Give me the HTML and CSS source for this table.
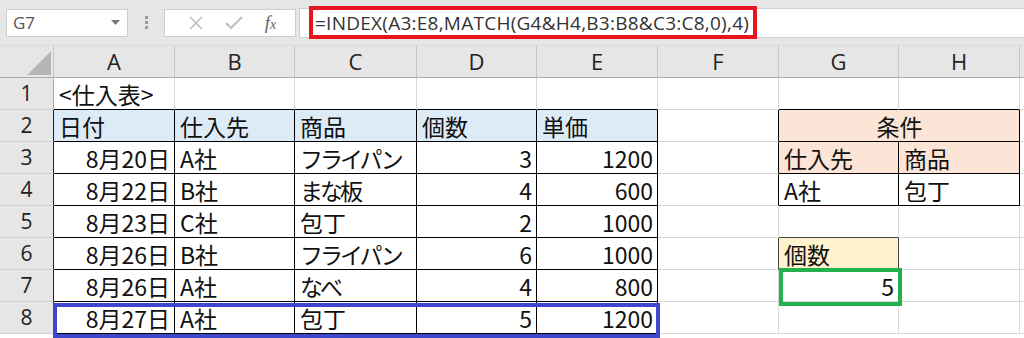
FILE: index.html
```html
<!DOCTYPE html>
<html lang="ja">
<head>
    <meta charset="UTF-8">
    <title>仕入表</title>
    <link rel="stylesheet" href="styles.css">
</head>
<body>
    <div class="toolbar">
        <div class="name-box">
            <span>G7</span>
            <svg class="caret" width="9" height="5" viewBox="0 0 9 5"><path d="M0 0h9L4.5 5z" fill="#777"/></svg>
        </div>
        <div class="grip"><i></i><i></i><i></i></div>
        <div class="fx-box">
            <svg width="16" height="16" viewBox="0 0 16 16"><path d="M2 2l12 12M14 2L2 14" stroke="#bdbdbd" stroke-width="1.6" fill="none"/></svg>
            <svg width="18" height="16" viewBox="0 0 18 16"><path d="M1 8l5 5L17 2" stroke="#bdbdbd" stroke-width="2" fill="none"/></svg>
            <span class="fx">f<small>x</small></span>
        </div>
        <div class="formula">
            <span class="hl">=INDEX(A3:E8,MATCH(G4&amp;H4,B3:B8&amp;C3:C8,0),4)</span>
        </div>
    </div>

    <div class="sheet">
        <!-- column headers -->
        <div class="corner"><div class="tri"></div></div>
        <div class="ch">A</div><div class="ch">B</div><div class="ch">C</div><div class="ch">D</div>
        <div class="ch">E</div><div class="ch">F</div><div class="ch">G</div><div class="ch">H</div><div class="ch"></div>

        <!-- row 1 -->
        <div class="rh">1</div>
        <div class="c top">&lt;仕入表&gt;</div><div class="c top"></div><div class="c top"></div><div class="c top"></div><div class="c top"></div>
        <div class="c"></div><div class="c top"></div><div class="c top"></div><div class="c"></div>

        <!-- row 2 -->
        <div class="rh k">2</div>
        <div class="c t blue">日付</div><div class="c t blue">仕入先</div><div class="c t blue">商品</div><div class="c t blue">個数</div><div class="c t blue">単価</div>
        <div class="c rb"></div><div class="c t peach span2 mid">条件</div><div class="c"></div>

        <!-- row 3 -->
        <div class="rh k">3</div>
        <div class="c t r">8月20日</div><div class="c t">A社</div><div class="c t p">フライパン</div><div class="c t r">3</div><div class="c t r">1200</div>
        <div class="c rb"></div><div class="c t peach">仕入先</div><div class="c t peach">商品</div><div class="c"></div>

        <!-- row 4 -->
        <div class="rh k">4</div>
        <div class="c t r">8月22日</div><div class="c t">B社</div><div class="c t p">まな板</div><div class="c t r">4</div><div class="c t r">600</div>
        <div class="c rb"></div><div class="c t">A社</div><div class="c t">包丁</div><div class="c"></div>

        <!-- row 5 -->
        <div class="rh k">5</div>
        <div class="c t r">8月23日</div><div class="c t">C社</div><div class="c t">包丁</div><div class="c t r">2</div><div class="c t r">1000</div>
        <div class="c"></div><div class="c gb"></div><div class="c"></div><div class="c"></div>

        <!-- row 6 -->
        <div class="rh k">6</div>
        <div class="c t r">8月26日</div><div class="c t">B社</div><div class="c t p">フライパン</div><div class="c t r">6</div><div class="c t r">1000</div>
        <div class="c grb"></div><div class="c yellow">個数</div><div class="c"></div><div class="c"></div>

        <!-- row 7 -->
        <div class="rh k">7</div>
        <div class="c t r">8月26日</div><div class="c t">A社</div><div class="c t p">なべ</div><div class="c t r">4</div><div class="c t r">800</div>
        <div class="c"></div><div class="c r result">5</div><div class="c"></div><div class="c"></div>

        <!-- row 8 -->
        <div class="rh k">8</div>
        <div class="c t r">8月27日</div><div class="c t">A社</div><div class="c t">包丁</div><div class="c t r">5</div><div class="c t r">1200</div>
        <div class="c"></div><div class="c"></div><div class="c"></div><div class="c"></div>

        <div class="row-mark"></div>
    </div>
</body>
</html>
```

FILE: styles.css
```css
body {
    margin: 0;
    width: 1024px;
    height: 338px;
    overflow: hidden;
    background: #fff;
    font-family: "Noto Sans CJK JP", "Noto Sans", sans-serif;
    color: #111;
}

/* formula bar */
.toolbar {
    height: 46px;
    background: #e6e6e6;
    display: flex;
    align-items: center;
    padding-left: 6px;
    box-sizing: border-box;
    border-bottom: 1px solid #dcdcdc;
}
.name-box {
    width: 122px;
    height: 28px;
    box-sizing: border-box;
    background: #fff;
    border: 1px solid #cfcfcf;
    display: flex;
    align-items: center;
    justify-content: space-between;
    padding: 0 7px 0 6px;
    font: 17px "Open Sans", sans-serif;
    color: #555;
}
.grip {
    width: 36px;
    display: flex;
    flex-direction: column;
    align-items: center;
    gap: 2px;
}
.grip i {
    width: 3px;
    height: 3px;
    background: #9a9a9a;
}
.fx-box {
    width: 132px;
    height: 28px;
    box-sizing: border-box;
    background: #fff;
    border: 1px solid #cfcfcf;
    display: flex;
    align-items: center;
    justify-content: space-around;
    padding: 0 8px 0 12px;
}
.fx {
    font: italic 19px "Liberation Serif", serif;
    color: #666;
}
.fx small {
    font-size: 14px;
}
.formula {
    flex: 1;
    height: 28px;
    margin-left: 3px;
    background: #fff;
    border: 1px solid #cfcfcf;
    border-right: none;
    display: flex;
    align-items: center;
    padding-left: 9px;
}
.hl {
    border: 4px solid #e8141e;
    height: 25px;
    line-height: 25px;
    padding: 0 4px 0 2px;
    font: 19px "Open Sans", sans-serif;
    letter-spacing: 0.25px;
    color: #333;
    white-space: nowrap;
}

/* grid */
.sheet {
    position: relative;
    display: grid;
    grid-template-columns: 54px 121px 120px 122px 120px 121px 121px 120px 121px 1fr;
    grid-template-rows: 32px repeat(8, 32px);
}
.corner, .ch, .rh {
    background: #e6e6e6;
    box-sizing: border-box;
    font: 21px/31px "Open Sans", sans-serif;
    color: #222;
    text-align: center;
}
.ch {
    font-size: 22px;
}
.corner {
    border-right: 1px solid #c4c4c4;
    border-bottom: 1px solid #ababab;
    position: relative;
}
.tri {
    position: absolute;
    right: 2px;
    bottom: 2px;
    width: 24px;
    height: 24px;
    background: #b5b5b5;
    clip-path: polygon(100% 0, 100% 100%, 0 100%);
}
.ch {
    border-right: 1px solid #c6c6c6;
    border-bottom: 1px solid #ababab;
}
.rh {
    border-right: 1px solid #ababab;
    border-bottom: 1px solid #d0d0d0;
}
.rh.k {
    border-right-color: #222;
}
.c {
    box-sizing: border-box;
    border-right: 1px solid #d9d9d9;
    border-bottom: 1px solid #d9d9d9;
    padding: 0 4px 0 5px;
    font-size: 23px;
    line-height: 32px;
    white-space: nowrap;
}
/* kana set tighter, as in the sheet font */
.p { letter-spacing: -3px; }
.r { text-align: right; }
.mid { text-align: center; }
.span2 { grid-column: span 2; }
.top { border-bottom-color: #000; }
.t {
    border-right-color: #000;
    border-bottom-color: #000;
}
.rb { border-right-color: #000; }
.gb { border-bottom-color: #444; }
.grb { border-right-color: #444; }
.blue { background: #ddebf7; }
.peach { background: #fce4d6; }
.yellow {
    background: #fff2cc;
    border-right-color: #444;
}
.result {
    position: relative;
}
.result::after {
    content: "";
    position: absolute;
    left: 0;
    top: -2px;
    width: 123px;
    height: 38px;
    box-sizing: border-box;
    border: 4px solid #22b14c;
}

/* highlighted row 8, A to E */
.row-mark {
    position: absolute;
    left: 53px;
    top: 257px;
    width: 607px;
    height: 35px;
    box-sizing: border-box;
    border: 4px solid #3f48cc;
}
```
